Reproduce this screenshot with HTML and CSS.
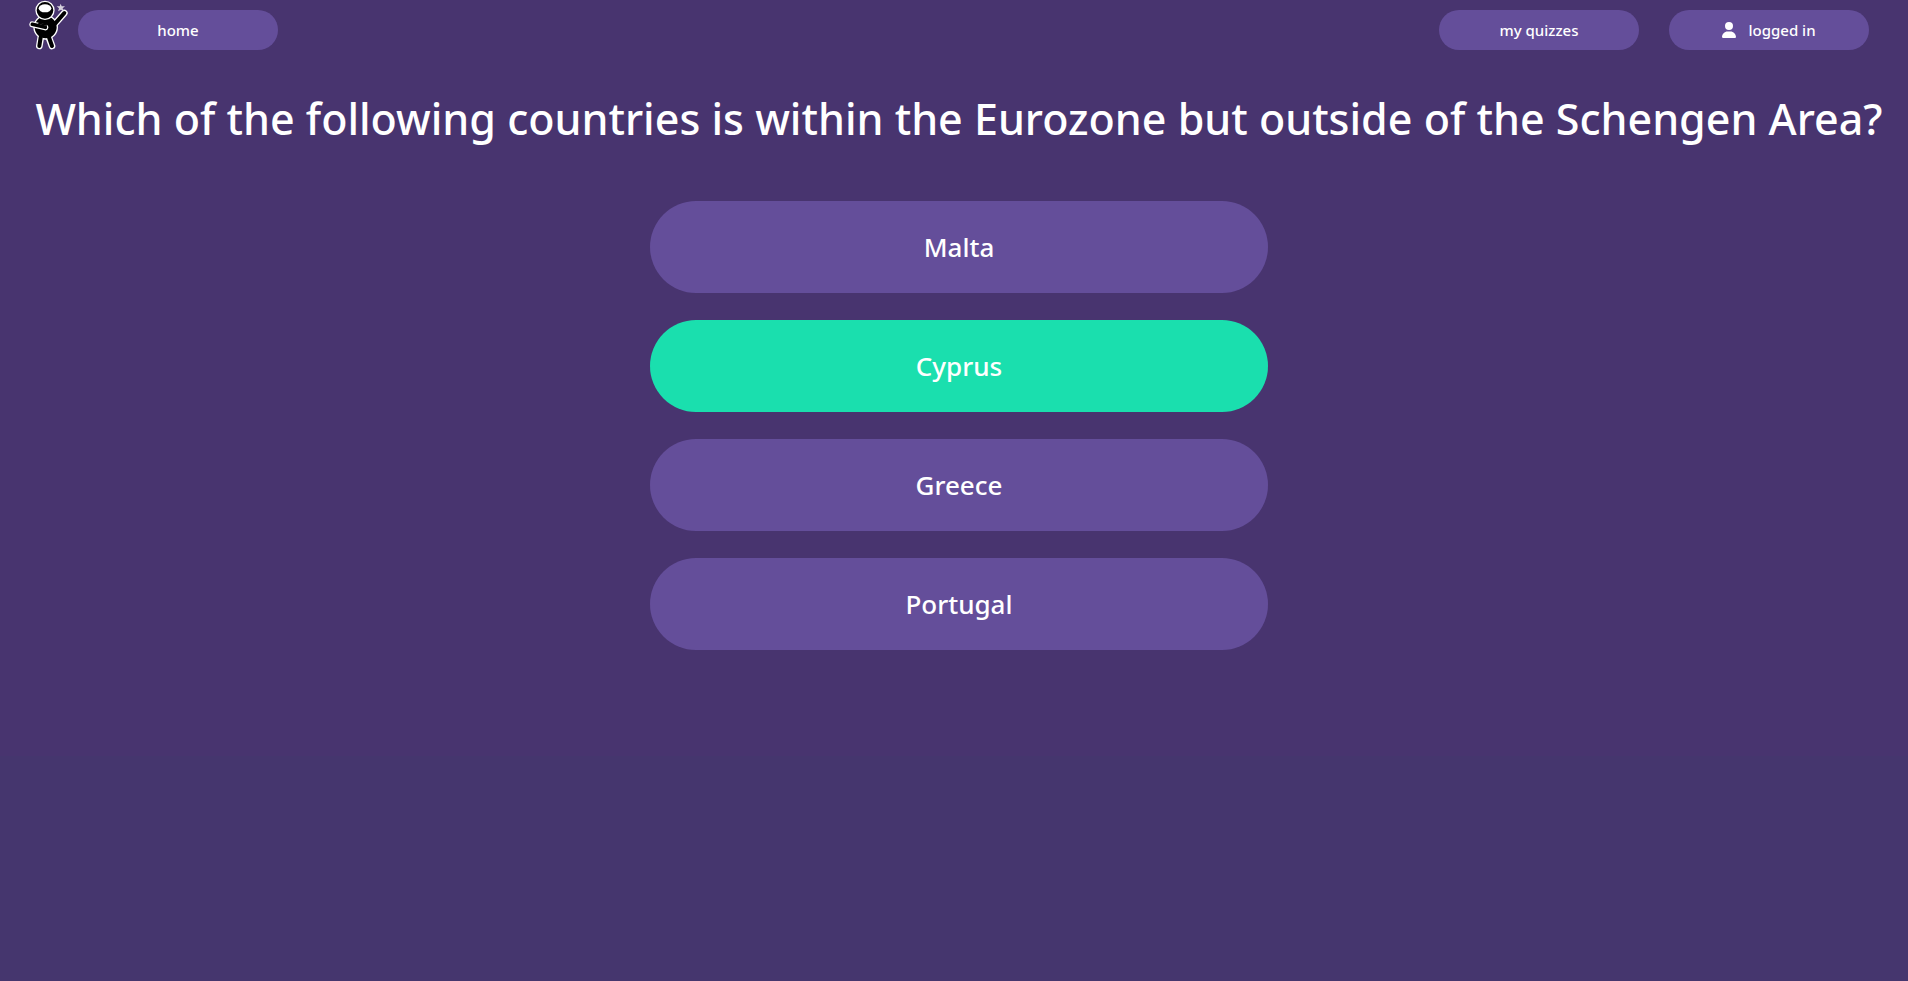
FILE: index.html
```html
<!DOCTYPE html>
<html lang="en">
<head>
<meta charset="utf-8">
<meta name="viewport" content="width=device-width, initial-scale=1">
<title>Quiz</title>
<link rel="stylesheet" href="styles.css">
</head>
<body>
<header class="topbar">
  <svg class="logo" viewBox="87 0 117 150" role="img" aria-label="Ninja">
    <g stroke-linecap="round" fill="none">
      <path d="M122 114L118 138M147 114L156 138M168 68L193 39" stroke="#fff" stroke-width="20"/>
    </g>
    <circle cx="137" cy="82" r="35" fill="#000" stroke="#fff" stroke-width="4"/>
    <path d="M122 112L118 138M147 112L156 138M166 70L193 39" fill="none" stroke="#000" stroke-width="12" stroke-linecap="round"/>
    <circle cx="135" cy="31" r="27" fill="#000" stroke="#fff" stroke-width="4"/>
    <ellipse cx="135" cy="25" rx="19" ry="12" fill="#fff"/>
    <g stroke-linecap="round" fill="none">
      <path d="M97 73L136 82" stroke="#fff" stroke-width="18"/>
      <path d="M97 73L136 82" stroke="#000" stroke-width="11"/>
      <path d="M117 70L139 75" stroke="#000" stroke-width="5"/>
    </g>
    <path d="M182 11L185 19L195 19L188 25L191 34L183 29L174 34L177 25L170 19L179 19Z" fill="#d6d1dd"/>
  </svg>
  <nav class="nav">
    <a class="pill" href="#home">home</a>
    <div class="nav-end">
      <a class="pill" href="#quizzes">my quizzes</a>
      <a class="pill" href="#account">
        <svg class="user" viewBox="0 0 448 512" aria-hidden="true"><path fill="currentColor" d="M224 256A128 128 0 1 0 224 0a128 128 0 1 0 0 256zm-45.7 48C79.8 304 0 383.8 0 482.3C0 498.7 13.3 512 29.7 512H418.3c16.4 0 29.7-13.3 29.7-29.7C448 383.8 368.2 304 269.7 304H178.3z"/></svg>
        logged in
      </a>
    </div>
  </nav>
</header>
<main class="quiz">
  <h1 class="question">Which of the following countries is within the Eurozone but outside of the Schengen Area?</h1>
  <div class="answers">
    <button class="answer" type="button">Malta</button>
    <button class="answer correct" type="button">Cyprus</button>
    <button class="answer" type="button">Greece</button>
    <button class="answer" type="button">Portugal</button>
  </div>
</main>
</body>
</html>
```
FILE: styles.css
```css
* { box-sizing: border-box; }
body {
  margin: 0;
  min-height: 100vh;
  background: linear-gradient(#48346f 0 756px, #45366e 756px);
  color: #fff;
  font-family: "Noto Sans", sans-serif;
  font-weight: 500;
}
.topbar {
  display: flex;
  gap: 10px;
  padding: 0 39px 0 29px;
}
.logo { width: 39px; height: 50px; flex: none; }
.nav {
  display: flex;
  flex: 1;
  flex-wrap: wrap;
  justify-content: space-between;
  padding-top: 10px;
}
.nav-end { display: flex; gap: 30px; }
.pill {
  display: flex;
  align-items: center;
  justify-content: center;
  gap: 12px;
  width: 200px;
  height: 40px;
  border-radius: 20px;
  background: #644e9a;
  color: #fff;
  font-size: 15px;
  text-decoration: none;
}
.user { width: 14px; height: 16px; }
.quiz { padding: 37px 20px 0 30px; }
.question {
  margin: 0;
  font-size: 43px;
  font-weight: 500;
  line-height: 64px;
  text-align: center;
}
.answers {
  display: grid;
  gap: 27px;
  width: 100%;
  max-width: 618px;
  margin: 50px auto 0;
}
.answer {
  height: 92px;
  border: 0;
  border-radius: 46px;
  background: #644e9a;
  color: inherit;
  font: inherit;
  font-size: 26px;
  cursor: pointer;
}
.correct { background: #1adfae; }
```
